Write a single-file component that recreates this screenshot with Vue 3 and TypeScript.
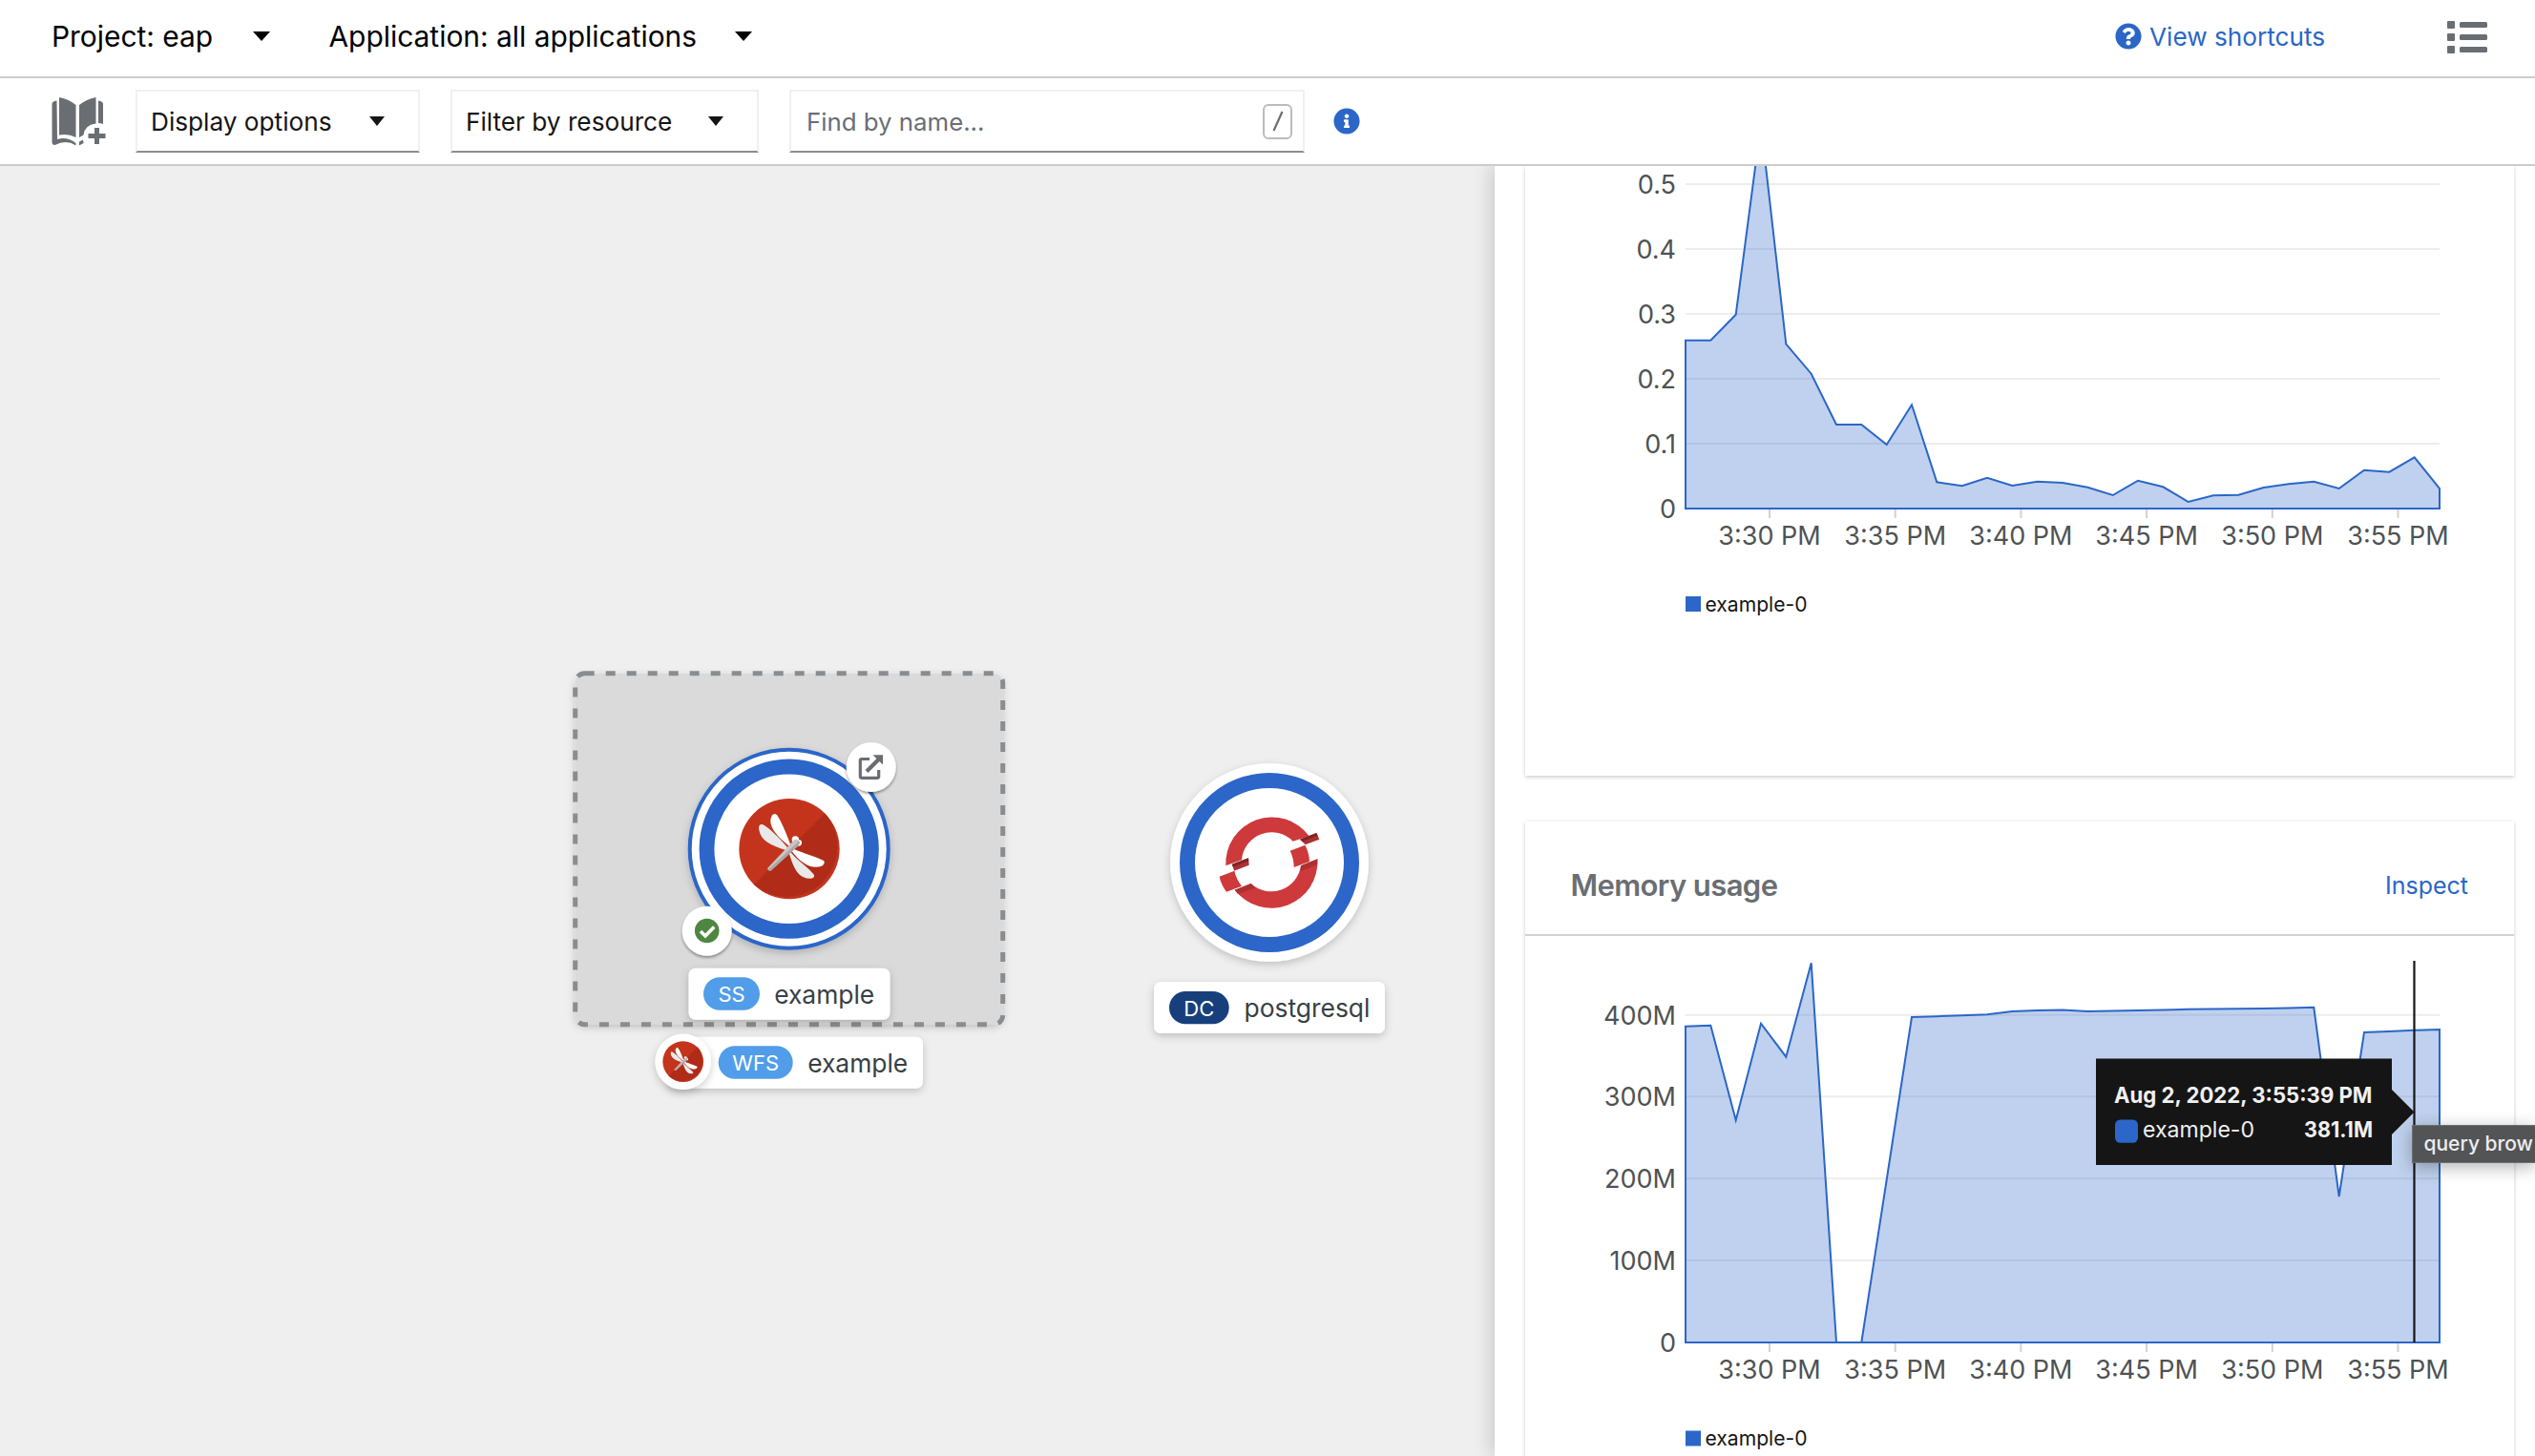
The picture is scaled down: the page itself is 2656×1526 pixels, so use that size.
<script setup lang="ts">
interface Tick { label: string; y: number }

const plotLeft = 1766
const plotRight = 2556
const step = (plotRight - plotLeft) / 30

const cpuBase = 533
const cpuY = [
  356.7, 356.7, 329.7, 130, 360.7, 391.7, 445, 445, 466, 424.3, 505.3, 509.3, 500.7, 509, 504.7, 506,
  510.7, 519, 503.7, 510.3, 526, 519.3, 518.7, 511, 507.3, 504.7, 512, 492.7, 494.7, 479.3, 512,
]
const memBase = 1407
const memY = [
  1075.7, 1074.7, 1174, 1072.7, 1107.7, 1009.3, 1407, 1407, 1236.5, 1066, 1065.2, 1064.2, 1063.3, 1060, 1059, 1058.5,
  1060, 1059.5, 1059, 1058.6, 1057.8, 1057.6, 1057.3, 1057, 1056.5, 1055.8, 1254, 1082, 1081, 1079.8, 1079,
]

function areaPath(ys: number[], base: number): string {
  const line = ys.map((y, i) => `L${(plotLeft + i * step).toFixed(1)} ${y}`).join(' ')
  return `M${plotLeft} ${base} ${line} L${plotRight} ${base} Z`
}

const cpuTicks: Tick[] = [
  { label: '0.5', y: 193 }, { label: '0.4', y: 261 }, { label: '0.3', y: 329 },
  { label: '0.2', y: 397 }, { label: '0.1', y: 465 }, { label: '0', y: 533 },
]
const memTicks: Tick[] = [
  { label: '400M', y: 1063.7 }, { label: '300M', y: 1149.2 }, { label: '200M', y: 1235.3 },
  { label: '100M', y: 1321 }, { label: '0', y: 1407 },
]
const times = ['3:30 PM', '3:35 PM', '3:40 PM', '3:45 PM', '3:50 PM', '3:55 PM'].map((label, i) => ({
  label,
  x: 1854 + i * 131.7,
}))

const charts = [
  { id: 'cpu', viewBox: '1598 174 1036 639', h: 639, title: '', ticks: cpuTicks, base: cpuBase, area: areaPath(cpuY, cpuBase), legendY: 625 },
  { id: 'memory', viewBox: '1598 981 1036 545', h: 545, title: 'Memory usage', ticks: memTicks, base: memBase, area: areaPath(memY, memBase), legendY: 1499.5 },
]
</script>

<template>
  <div class="page">
    <header class="context-bar">
      <button class="context-item">Project: eap <i class="caret big"></i></button>
      <button class="context-item app">Application: all applications <i class="caret big"></i></button>
      <a class="shortcuts">
        <svg width="28" height="28" viewBox="0 0 512 512"><path fill="#2b66c8" d="M504 256c0 137-111 248-248 248S8 393 8 256 119 8 256 8s248 111 248 248zM262.700 90c-54.500 0-89.300 23-116.500 63.800-3.500 5.300-2.400 12.400 2.700 16.300l34.700 26.300c5.200 3.900 12.600 3 16.700-2.100 17.900-22.700 30.100-35.800 57.300-35.800 20.400 0 45.700 13.100 45.700 33 0 15-12.400 22.700-32.500 34C247.100 238.500 216 254.900 216 296v4c0 6.600 5.400 12 12 12h56c6.600 0 12-5.400 12-12v-1.300c0-28.500 83.200-29.600 83.200-106.700 0-58-60.200-102-116.500-102zM256 338c-25.400 0-46 20.600-46 46s20.600 46 46 46 46-20.600 46-46-20.600-46-46-46z" /></svg>
        View shortcuts
      </a>
      <svg class="list" width="42" height="34" viewBox="0 0 42 34" fill="#6a6e73">
        <g v-for="r in 3" :key="r">
          <rect x="0" :y="(r - 1) * 13" width="8" height="8" rx="1" />
          <rect x="13" :y="(r - 1) * 13 + 1" width="29" height="6" rx="1.500" />
        </g>
      </svg>
    </header>

    <div class="toolbar">
      <svg class="book" width="58" height="52" viewBox="53.500 101 58 52">
        <g fill="#6a6e73">
          <path d="M61.500 102Q72 104 79 110V144Q71 139.500 61.500 141.500Z" />
          <path d="M100 102Q90 104 82.500 110V144L87 141.500Q88 131 100 129.500Z" />
          <path d="M59 105.500Q54 106 54 109V149Q54 152 57 152Q69 146 79 152.500V150Q70 143 59.500 146Z" />
          <path d="M102.500 105.500Q107.500 106 107.500 109V130Q105 129 102.500 129Z" />
          <path d="M82.500 148.500L86.500 146.500L87 150L82.500 152.500Z" />
          <path d="M98.500 134h5v6h6.500v5h-6.500v6h-5v-6H92v-5h6.500z" />
        </g>
      </svg>
      <button class="select display">Display options <i class="caret"></i></button>
      <button class="select filter">Filter by resource <i class="caret"></i></button>
      <div class="search"><span>Find by name...</span><kbd>
        <svg width="14" height="24" viewBox="0 0 14 24"><path d="M11.500 2L2.500 22" stroke="#6a6e73" stroke-width="2.200" /></svg>
      </kbd></div>
      <svg class="info" width="28" height="28" viewBox="0 0 512 512"><path fill="#2b66c8" d="M256 8C119 8 8 119 8 256s111 248 248 248 248-111 248-248S393 8 256 8zm0 110c23.200 0 42 18.800 42 42s-18.800 42-42 42-42-18.800-42-42 18.800-42 42-42zm56 254c0 6.600-5.400 12-12 12h-88c-6.600 0-12-5.400-12-12v-24c0-6.600 5.400-12 12-12h12v-64h-12c-6.600 0-12-5.400-12-12v-24c0-6.600 5.400-12 12-12h64c6.600 0 12 5.400 12 12v100h12c6.600 0 12 5.400 12 12v24z" /></svg>
    </div>

    <main class="body">
      <svg class="topology" width="1566" height="1352" viewBox="0 174 1566 1352">
        <defs>
          <filter id="soft" x="-20%" y="-20%" width="140%" height="150%">
            <feDropShadow dx="0" dy="3" stdDeviation="4" flood-color="#030303" flood-opacity=".2" />
          </filter>
          <filter id="badge" x="-20%" y="-20%" width="140%" height="150%">
            <feDropShadow dx="0" dy="2" stdDeviation="1.500" flood-color="#030303" flood-opacity=".4" />
          </filter>
          <!-- Dragonfly mark, centred on 711,599 with radius 158 -->
          <g id="dragonfly">
            <circle cx="711" cy="599" r="158" fill="#c4341d" />
            <path d="M822 487A158 158 0 0 1 600 711Z" fill="#b02c18" />
            <path d="M714 584C700 548 684 508 672 493C664 485 655 490 652 508C650 535 675 562 710 590Z" fill="#fff" />
            <path d="M708 598C680 565 650 535 628 523C619 519 613 526 616 540C622 575 655 588 700 603Z" fill="#e9e9ea" />
            <path d="M724 599C755 612 800 626 819 636C824 641 820 652 808 655C775 662 745 640 720 608Z" fill="#fff" />
            <path d="M712 606C740 640 775 660 789 681C791 689 784 693 772 692C735 690 722 650 710 612Z" fill="#e9e9ea" />
            <circle cx="730" cy="570" r="11" fill="#fff" />
            <circle cx="740" cy="580" r="10" fill="#fff" />
            <path d="M727 570Q738 564 744 578Q744 584 738 590L654 667Q645 670 642 661Z" fill="#c9c5c3" />
            <path d="M742 574Q746 580 738 590L654 667Q648 670 644 665Z" fill="#aaa6a4" />
          </g>
        </defs>

        <rect x="602.700" y="705.700" width="448" height="368" rx="10" fill="#dadada" filter="url(#soft)" />
        <rect x="602.700" y="705.700" width="448" height="368" rx="10" fill="none" stroke="#8a8d90" stroke-width="5" stroke-dasharray="10 12" />

        <circle cx="826.700" cy="889.700" r="104" fill="#fff" stroke="#2b66c8" stroke-width="4" filter="url(#soft)" />
        <circle cx="826.700" cy="889.700" r="86.200" fill="#fff" stroke="#2b66c8" stroke-width="15.800" />
        <use href="#dragonfly" transform="translate(590 690) scale(.33333)" />

        <circle cx="912.700" cy="804" r="26" fill="#fff" filter="url(#badge)" />
        <g fill="none" stroke="#6a6e73" stroke-width="3.200">
          <path d="M911 795.500H903Q901.300 795.500 901.300 797V813.500Q901.300 815.300 903 815.300H919Q920.700 815.300 920.700 813.500V807" />
          <path d="M908 808.500L922 794.500" stroke-width="4.200" />
        </g>
        <path d="M914.500 791.300H925V801.500Z" fill="#6a6e73" />

        <circle cx="740.700" cy="975.700" r="26" fill="#fff" filter="url(#badge)" />
        <circle cx="740.700" cy="975.500" r="12.800" fill="#4f8640" />
        <path d="M734 976L739 981L748.200 971.500" fill="none" stroke="#fff" stroke-width="3.600" />

        <rect x="721.500" y="1014.700" width="211" height="54" rx="7" fill="#fff" filter="url(#soft)" />
        <rect x="737" y="1024.300" width="59" height="34.500" rx="17.200" fill="#519de9" />
        <text class="kind" x="766.500" y="1050">SS</text>
        <text class="name" x="863.700" y="1052">example</text>

        <rect x="700" y="1086.700" width="267" height="54" rx="7" fill="#fff" filter="url(#soft)" />
        <circle cx="715.700" cy="1112.700" r="29.300" fill="#fff" filter="url(#soft)" />
        <use href="#dragonfly" transform="translate(715.700 1112.700) scale(.135) translate(-711 -599)" />
        <rect x="752.700" y="1096.300" width="78" height="34.500" rx="17.200" fill="#519de9" />
        <text class="kind" x="791.700" y="1122">WFS</text>
        <text class="name" x="898.700" y="1124">example</text>

        <circle cx="1330" cy="904" r="104" fill="#fff" filter="url(#soft)" />
        <circle cx="1330" cy="904" r="86" fill="#fff" stroke="#2b66c8" stroke-width="16" />
        <g transform="translate(1190 780) scale(.33333)">
          <path d="M283 382A145 145 0 0 1 545 289L494 305A94 94 0 0 0 333 364Z" fill="#ce393c" />
          <path d="M571 361A145 145 0 0 1 311 458L362 438A94 94 0 0 0 519 382Z" fill="#ce393c" />
          <path d="M571 361V379L518 400L519 382Z" fill="#ac3133" />
          <path d="M311 458L362 438L376 452L321 471Z" fill="#ac3133" />
          <path d="M485 335L532 317Q545 341 546 369L497 387Q497 360 485 335Z" fill="#ce393c" />
          <path d="M263 416L310 398Q316 425 333 446L285 464Q268 442 263 416Z" fill="#ce393c" />
          <path d="M516 299L568 279L577 299L533 316Z" fill="#ac3133" />
          <path d="M516 299L568 279L572 287L524 306Z" fill="#802326" />
          <path d="M303 377L354 358L356 380L309 398Z" fill="#ac3133" />
          <path d="M303 377L354 358L355 367L305 386Z" fill="#802326" />
        </g>
        <rect x="1209" y="1029" width="242" height="54" rx="7" fill="#fff" filter="url(#soft)" />
        <rect x="1225" y="1039" width="62.700" height="34.300" rx="17.100" fill="#173f7c" />
        <text class="kind" x="1256.300" y="1064.500">DC</text>
        <text class="name" x="1369.500" y="1066">postgresql</text>
      </svg>

      <aside class="panel">
        <section v-for="c in charts" :key="c.id" class="card">
          <div v-if="c.title" class="card-head">
            <h2>{{ c.title }}</h2>
            <a>Inspect</a>
          </div>
          <svg class="chart" width="1036" :height="c.h" :viewBox="c.viewBox">
            <path v-for="t in c.ticks.slice(0, -1)" :key="t.label" :d="`M1766 ${t.y}H2556`" stroke="#ededed" stroke-width="2" />
            <path v-for="t in times" :key="t.label" :d="`M${t.x} ${c.base}v10`" stroke="#d2d2d2" stroke-width="2" />
            <path :d="c.area" fill="#2b66c8" fill-opacity=".3" stroke="#2b66c8" stroke-width="2" />
            <text v-for="t in c.ticks" :key="t.label" class="axis end" x="1756" :y="t.y + 10">{{ t.label }}</text>
            <text v-for="t in times" :key="t.label" class="axis mid" :x="t.x" :y="c.base + 38">{{ t.label }}</text>
            <rect x="1766" :y="c.legendY" width="16" height="16" fill="#2b66c8" />
            <text class="legend" x="1786.500" :y="c.legendY + 15.700">example-0</text>
            <g v-if="c.id === 'memory'">
              <path d="M2529.500 1007V1407" stroke="#151515" stroke-width="2.200" />
              <path d="M2196 1109.500H2506V1142L2529.500 1165.500L2506 1189V1221H2196Z" fill="#151515" />
              <text class="tip bold" x="2215" y="1156" textLength="270.500" lengthAdjust="spacingAndGlyphs">Aug 2, 2022, 3:55:39 PM</text>
              <rect x="2216" y="1173.500" width="24" height="24.300" rx="5.500" fill="#2b66c8" />
              <text class="tip" x="2245" y="1191.700" textLength="117" lengthAdjust="spacingAndGlyphs">example-0</text>
              <text class="tip bold" x="2414" y="1191.700" textLength="72" lengthAdjust="spacingAndGlyphs">381.1M</text>
            </g>
          </svg>
        </section>
        <div class="native-tip">query brow</div>
      </aside>
    </main>
  </div>
</template>

<style>
body { overflow: hidden; }
</style>

<style scoped>
.page {
  width: 2656px; height: 1526px; overflow: hidden; background: #fff;
  display: flex; flex-direction: column; color: #151515;
  font-family: Inter, "Liberation Sans", sans-serif;
}
button { border: 0; background: none; padding: 0; font: inherit; color: inherit; text-align: left; white-space: nowrap; }
.caret { width: 0; height: 0; border: 8.500px solid transparent; border-top: 10px solid #151515; border-bottom: 0; }
.caret.big { border-width: 10.500px 9.800px 0; border-top-color: #000; }

.context-bar {
  box-sizing: border-box; height: 82px; flex: none; border-bottom: 2px solid #ccc;
  padding: 0 50px 4px 54px; display: flex; align-items: center; color: #000;
}
.context-item { display: flex; align-items: center; justify-content: space-between; font-size: 29.900px; width: 228.500px; }
.context-item.app { margin-left: 62px; width: 443px; }
.shortcuts { margin-left: auto; display: flex; align-items: center; gap: 8px; width: 348px; font-size: 26.200px; color: #2b66c8; }
.list { margin-top: 2px; }

.toolbar {
  box-sizing: border-box; height: 92px; flex: none; border-bottom: 2px solid #ccc;
  padding-left: 54px; display: flex; align-items: center; font-size: 26.200px;
}
.select, .search {
  box-sizing: border-box; height: 66px; display: flex; align-items: center; justify-content: space-between;
  border: 2px solid #f0f0f0; border-bottom-color: #8a8d90; padding: 0 35px 0 14px;
}
.display { width: 297.500px; margin-left: 30px; }
.filter { width: 322.500px; margin-left: 32.500px; }
.search { width: 540px; margin-left: 32.500px; padding: 0 11px 0 16px; color: #6a6e73; font-size: 25.800px; }
kbd { box-sizing: border-box; width: 31px; height: 37px; border: 2px solid #bbb; border-radius: 6px; display: flex; align-items: center; justify-content: center; }
.info { margin-left: 30px; }

.body { flex: 1; display: flex; min-height: 0; }
.topology { flex: none; display: block; background: #efefef; }
.kind { font-size: 22px; fill: #fff; text-anchor: middle; }
.name { font-size: 26.400px; fill: #393f44; text-anchor: middle; }

.panel {
  position: relative; flex: 1; background: #fff; padding-left: 32px; min-width: 0;
  display: flex; flex-direction: column; gap: 48px; box-shadow: -4px 0 18px rgba(3, 3, 3, .16); overflow: visible;
  clip-path: inset(0 0 0 -40px);
}
.card { width: 1036px; flex: none; box-shadow: 0 2px 4px rgba(3, 3, 3, .14), 0 0 4px rgba(3, 3, 3, .08); }
.card-head {
  box-sizing: border-box; height: 120px; border-bottom: 2px solid #d2d2d2; padding: 0 48px 0 47.500px;
  display: flex; align-items: center; justify-content: space-between;
}
.card-head h2 { margin: 15px 0 0; font-size: 31px; font-weight: 600; letter-spacing: -.600px; color: #6a6e73; }
.card-head a { margin-top: 15px; font-size: 25px; color: #2b66c8; }
.chart { display: block; }
.axis { font-size: 27px; fill: #4f5255; }
.end { text-anchor: end; }
.mid { text-anchor: middle; }
.legend { font-size: 21.100px; fill: #151515; }
.tip { font-size: 23px; fill: #f0f0f0; }
.bold { font-weight: 700; }
.native-tip {
  position: absolute; left: 960.500px; right: 0; top: 1005.300px; box-sizing: border-box; height: 39.500px;
  border: 1.500px solid #6e6f70; border-right: 0; background: #535456; color: #eee; padding-left: 12px;
  font-size: 21px; font-weight: 500; line-height: 37px; white-space: nowrap; box-shadow: 0 4px 18px rgba(0, 0, 0, .3);
}
</style>
